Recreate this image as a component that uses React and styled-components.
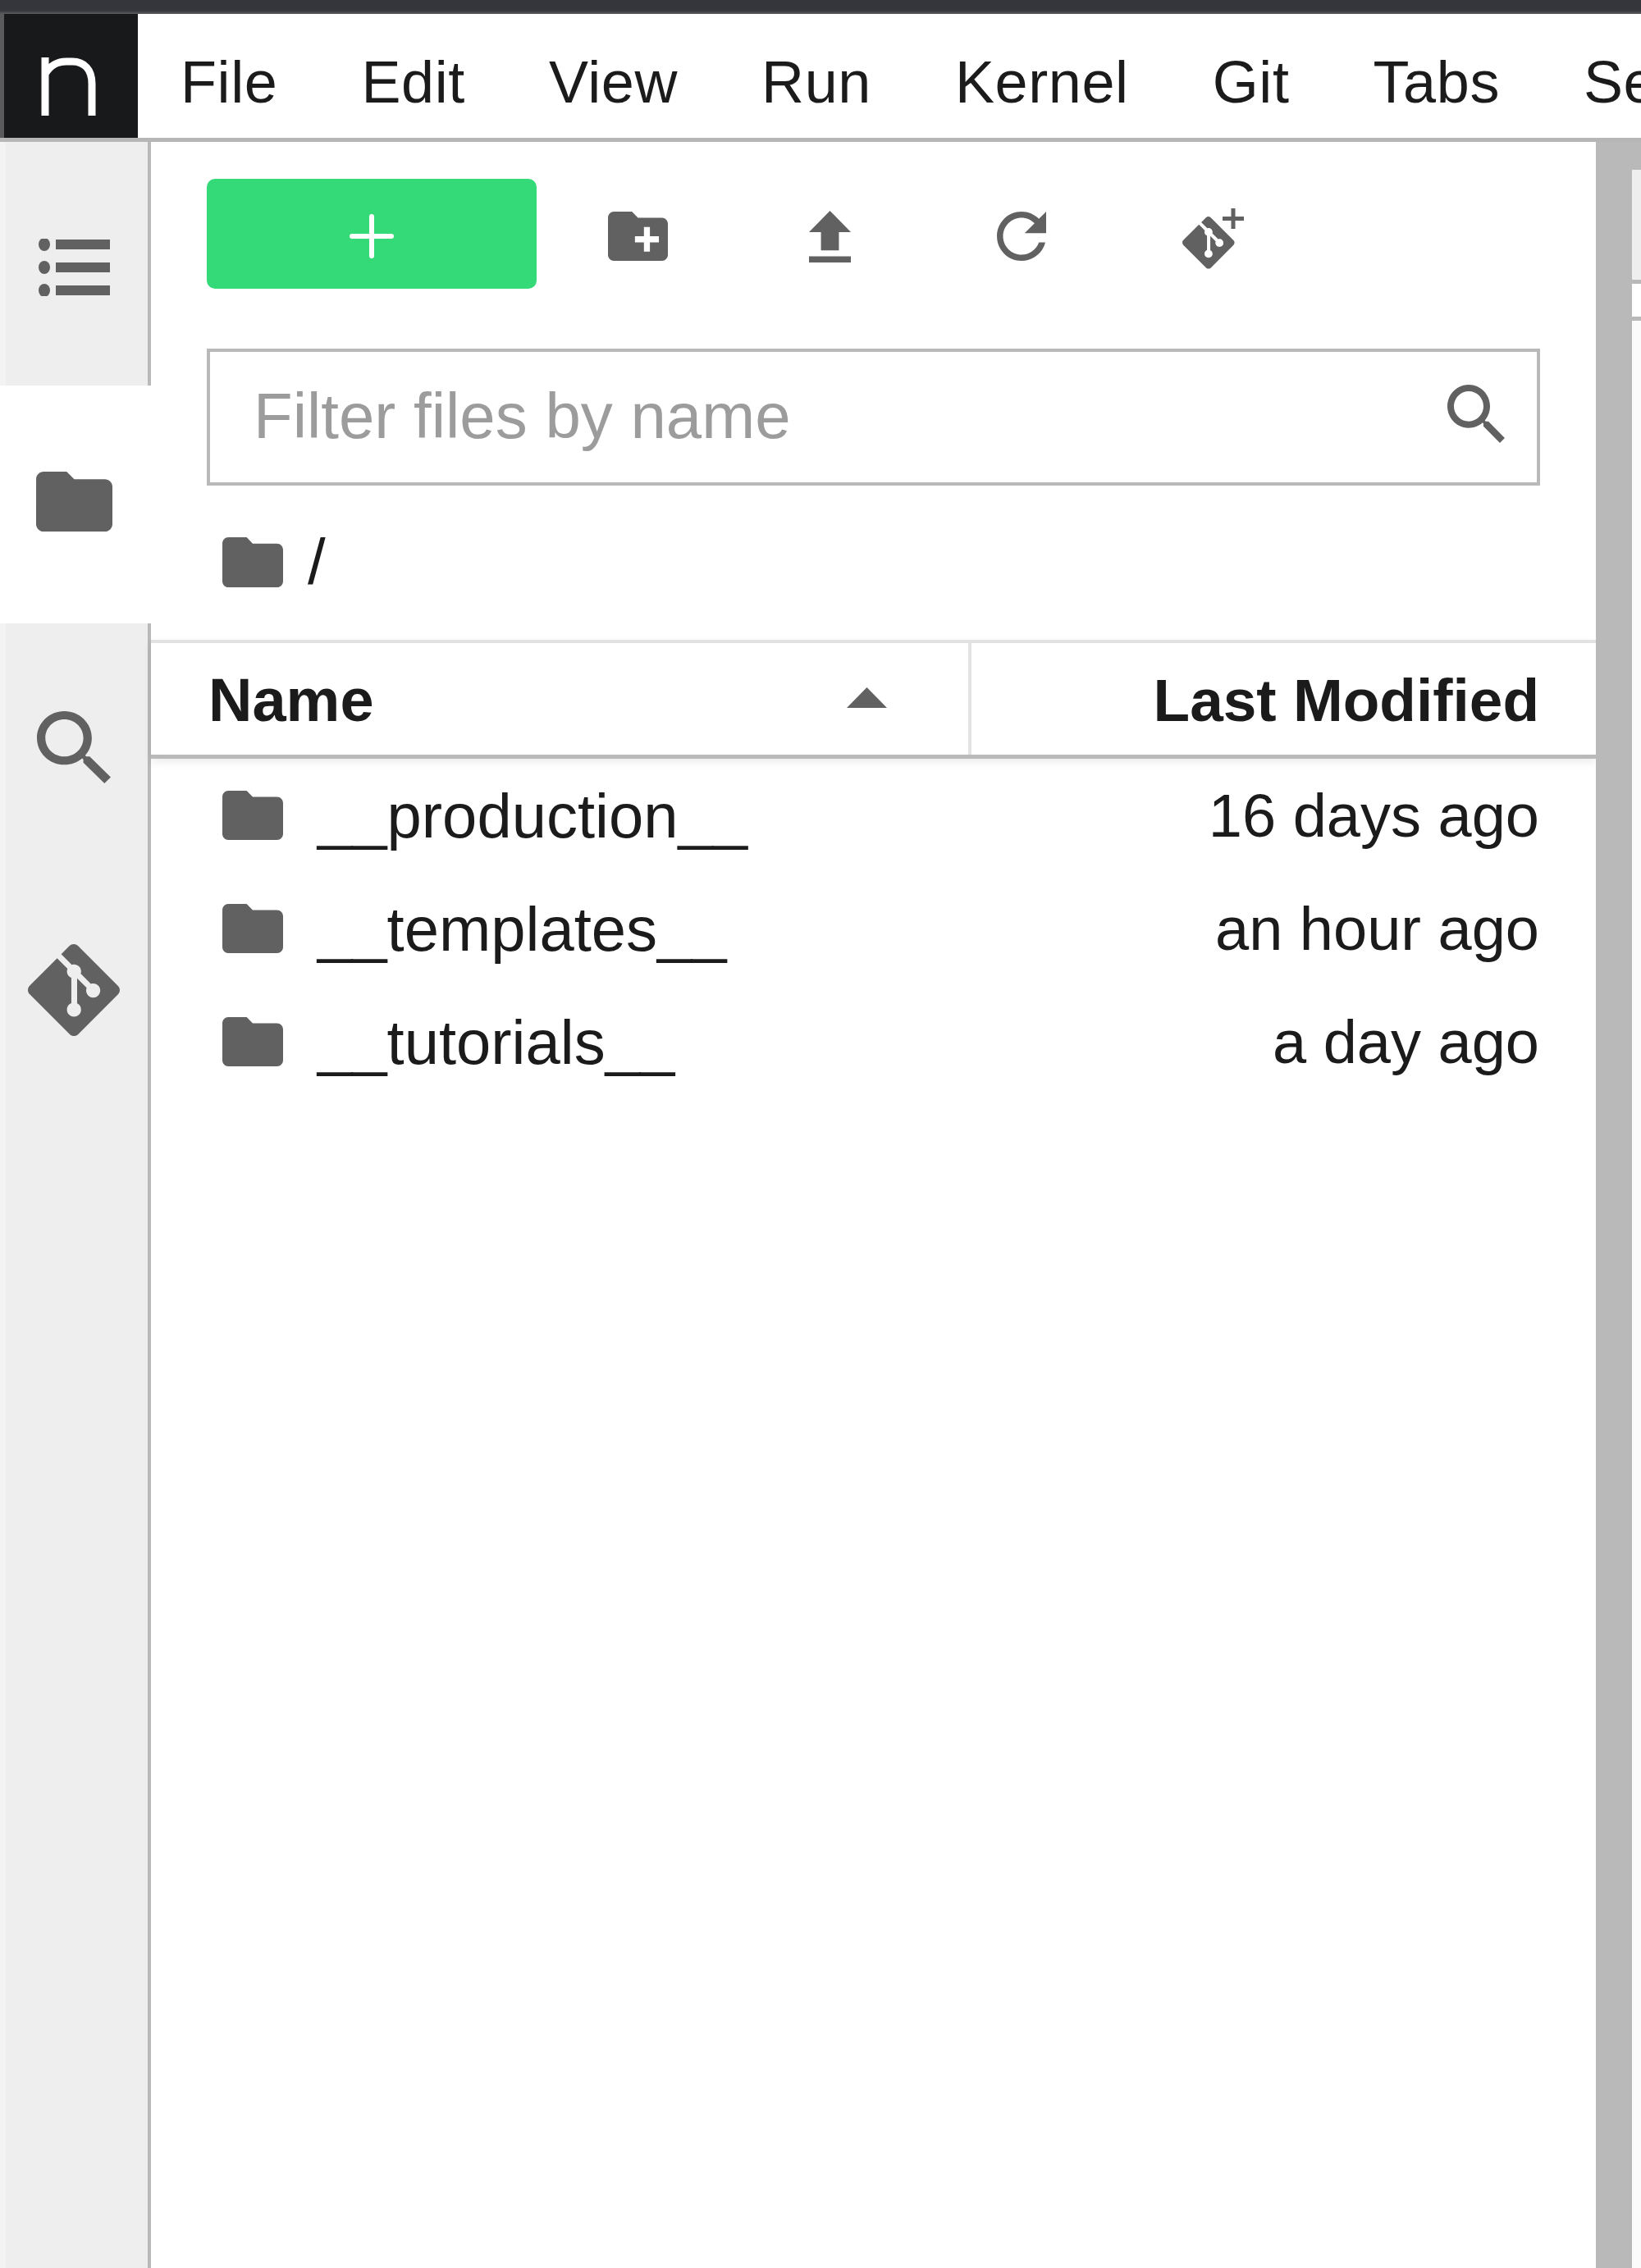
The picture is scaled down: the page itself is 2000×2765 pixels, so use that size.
import React from "react";
import styled, { createGlobalStyle } from "styled-components";

const Global = createGlobalStyle`
  html, body { margin: 0; padding: 0; background: #fff; }
  body { font-family: "Liberation Sans", Arial, sans-serif; color: #1b1b1b; overflow: hidden; }
  * { box-sizing: border-box; }
`;

const Page = styled.div`
  width: 2000px;
  height: 2765px;
  display: flex;
  flex-direction: column;
  overflow: hidden;
`;
const TopStrip = styled.div`
  height: 17px;
  flex: none;
  background: linear-gradient(#35363b 0, #35363b 13px, #5c5d61 17px);
`;
const MenuBar = styled.nav`
  height: 156px;
  flex: none;
  display: flex;
  align-items: stretch;
  border-bottom: 5px solid #b6b6b6;
  overflow: hidden;
`;
const Logo = styled.div`
  width: 168px;
  flex: none;
  display: flex;
  align-items: center;
  justify-content: center;
  background: #18191b;
  border-left: 5px solid #5a5a5c;
  padding: 26px 6px 0 0;
`;
const MenuItems = styled.div`
  display: flex;
  align-items: center;
  gap: 102px;
  padding: 14px 0 0 52px;
  flex: none;
`;
const MenuItem = styled.span`
  font-size: 72px;
  letter-spacing: 0.6px;
  white-space: nowrap;
  flex: none;
`;
const Body = styled.div`
  flex: 1;
  display: flex;
  min-height: 0;
`;
const Sidebar = styled.aside`
  width: 184px;
  flex: none;
  background: linear-gradient(to right, #f3f3f3 7px, #eeeeee 7px);
  border-right: 4px solid #b9b9b9;
  display: flex;
  flex-direction: column;
`;
const Tab = styled.div`
  height: ${(p) => p.$h}px;
  padding-top: ${(p) => p.$top || 0}px;
  padding-bottom: ${(p) => p.$bottom || 0}px;
  display: flex;
  align-items: center;
  justify-content: center;
  flex: none;
  color: #616161;
  ${(p) =>
    p.$active &&
    `
    background: #fff;
    width: 184px;
    margin-right: -4px;
    position: relative;
    padding-right: 4px;
  `}
`;
const Panel = styled.section`
  flex: 1;
  min-width: 0;
  display: flex;
  flex-direction: column;
`;
const PanelTop = styled.div`
  padding: 45px 68px 0;
`;
const Toolbar = styled.div`
  display: flex;
  align-items: stretch;
  height: 134px;
`;
const NewButton = styled.div`
  width: 402px;
  flex: none;
  margin-right: 6px;
  background: #35da78;
  border-radius: 10px;
  display: flex;
  align-items: center;
  justify-content: center;
  padding-top: 5px;
`;
const ToolButton = styled.div`
  width: 234px;
  flex: none;
  display: flex;
  align-items: center;
  justify-content: center;
  padding-top: ${(p) => p.$drop || 6}px;
  color: #616161;
`;
const Filter = styled.div`
  margin-top: 73px;
  height: 167px;
  border: 4px solid #b9b9b9;
  display: flex;
  align-items: center;
  justify-content: space-between;
  padding: 0 39px 2px 53px;
  color: #616161;
`;
const Placeholder = styled.span`
  font-size: 78px;
  color: #9c9c9c;
  white-space: nowrap;
`;
const FilterIcon = styled.span`
  display: flex;
  margin-bottom: 6px;
`;
const Crumbs = styled.div`
  height: 188px;
  display: flex;
  align-items: center;
  padding: 0 0 2px 19px;
  gap: 30px;
  color: #616161;
`;
const Slash = styled.span`
  font-size: 78px;
  color: #1b1b1b;
  line-height: 1;
`;
const Header = styled.div`
  height: 145px;
  flex: none;
  display: flex;
  border-top: 4px solid #e2e2e2;
  border-bottom: 5px solid #bababa;
  box-shadow: 0 4px 10px rgba(0, 0, 0, 0.08);
`;
const NameCol = styled.div`
  width: 1000px;
  flex: none;
  display: flex;
  align-items: center;
  justify-content: space-between;
  padding: 0 99px 0 70px;
  border-right: 4px solid #e2e2e2;
  color: #616161;
`;
const ModCol = styled.div`
  flex: 1;
  display: flex;
  align-items: center;
  justify-content: flex-end;
  padding-right: 69px;
`;
const HeadText = styled.span`
  font-size: ${(p) => p.$size}px;
  font-weight: 700;
  color: #1b1b1b;
  white-space: nowrap;
  padding-top: 3px;
`;
const ArrowWrap = styled.span`
  display: flex;
  margin-bottom: 3px;
`;
const List = styled.div`
  display: flex;
  flex-direction: column;
`;
const Row = styled.div`
  height: 138px;
  display: flex;
  align-items: center;
  padding: 0 69px 0 87px;
  color: #616161;
  gap: 42px;
`;
const FileName = styled.span`
  flex: 1;
  font-size: 76px;
  color: #1b1b1b;
  white-space: nowrap;
`;
const Modified = styled.span`
  font-size: 74px;
  color: #1b1b1b;
  white-space: nowrap;
`;
const Splitter = styled.div`
  width: 44px;
  flex: none;
  background: #b9b9b9;
`;
const Edge = styled.div`
  width: 11px;
  flex: none;
  display: flex;
  flex-direction: column;
`;
const EdgeBlock = styled.div`
  height: ${(p) => p.$h}px;
  flex: ${(p) => (p.$h ? "none" : 1)};
  background: ${(p) => p.$c};
`;

const FOLDER =
  "M10 4H4c-1.1 0-1.99.9-1.99 2L2 18c0 1.1.9 2 2 2h16c1.1 0 2-.9 2-2V8c0-1.1-.9-2-2-2h-8l-2-2z";
const GIT =
  "M23.546 10.93L13.067.452c-.604-.603-1.582-.603-2.188 0L8.708 2.627l2.76 2.76c.645-.215 1.379-.07 1.889.441.516.515.658 1.258.438 1.9l2.658 2.66c.645-.223 1.387-.078 1.9.435.721.72.721 1.884 0 2.604-.719.719-1.881.719-2.6 0-.539-.541-.674-1.337-.404-1.996L12.86 8.955v6.525c.176.086.342.203.488.348.713.721.713 1.883 0 2.6-.719.721-1.889.721-2.609 0-.719-.719-.719-1.879 0-2.598.182-.18.387-.316.605-.406V8.835c-.217-.091-.424-.222-.6-.401-.545-.545-.676-1.342-.396-2.009L7.636 3.7.45 10.881c-.6.605-.6 1.584 0 2.189l10.48 10.477c.604.604 1.582.604 2.186 0l10.43-10.43c.605-.603.605-1.582 0-2.187";
const SEARCH =
  "M15.5 14h-.79l-.28-.27C15.41 12.59 16 11.11 16 9.5 16 5.91 13.09 3 9.5 3S3 5.91 3 9.5 5.91 16 9.5 16c1.61 0 3.09-.59 4.23-1.57l.27.28v.79l5 4.99L20.49 19l-4.99-5zm-6 0C7.01 14 5 11.99 5 9.5S7.01 5 9.5 5 14 7.01 14 9.5 11.99 14 9.5 14z";

const Folder = ({ w, h }) => (
  <svg width={w} height={h} viewBox="2 4 20 16" preserveAspectRatio="none" fill="currentColor" style={{ flex: "none" }}>
    <path d={FOLDER} />
  </svg>
);
const Search = ({ w, h }) => (
  <svg width={w} height={h} viewBox="3 3 17.5 17.5" preserveAspectRatio="none" fill="currentColor">
    <path d={SEARCH} />
  </svg>
);
const ListIcon = () => (
  <svg width="87" height="70" viewBox="0 0 87 70" fill="currentColor">
    <ellipse cx="7" cy="7" rx="7" ry="8" />
    <ellipse cx="7" cy="35" rx="7" ry="8" />
    <ellipse cx="7" cy="63" rx="7" ry="8" />
    <rect x="21" y="1" width="66" height="12" />
    <rect x="21" y="29" width="66" height="12" />
    <rect x="21" y="57" width="66" height="12" />
  </svg>
);
const LogoMark = () => (
  <svg width="67" height="71" viewBox="0 0 67 71" fill="none" stroke="#fff" strokeWidth="9">
    <path d="M5 71V0M5 20C12 9 20 5 31 5H38C53 5 62 15 62 32V71" />
  </svg>
);
const Plus = () => (
  <svg width="54" height="54" viewBox="0 0 54 54" stroke="#fff" strokeWidth="6" strokeLinecap="round">
    <path d="M27 3V51M3 27H51" />
  </svg>
);
const NewFolder = () => (
  <svg width="73" height="60" viewBox="2 4 20 16" preserveAspectRatio="none" fill="currentColor">
    <path d="M20 6h-8l-2-2H4c-1.11 0-1.99.89-1.99 2L2 18c0 1.11.89 2 2 2h16c1.11 0 2-.89 2-2V8c0-1.11-.89-2-2-2zm-1 8h-3v3h-2v-3h-3v-2h3V9h2v3h3v2z" />
  </svg>
);
const Upload = () => (
  <svg width="51" height="63" viewBox="5 3 14 17" preserveAspectRatio="none" fill="currentColor">
    <path d="M9 16h6v-6h4l-7-7-7 7h4zm-4 2h14v2H5z" />
  </svg>
);
const Refresh = () => (
  <svg width="60" height="60" viewBox="4 4 16 16" fill="currentColor">
    <path d="M17.65 6.35C16.2 4.9 14.21 4 12 4c-4.42 0-7.99 3.58-7.99 8s3.57 8 7.99 8c3.73 0 6.84-2.55 7.73-6h-2.08c-.82 2.33-3.04 4-5.65 4-3.31 0-6-2.69-6-6s2.69-6 6-6c1.66 0 3.14.69 4.22 1.78L13 11h7V4l-2.35 2.35z" />
  </svg>
);
const GitPlus = () => (
  <svg width="76" height="75" viewBox="0 0 76 75" fill="currentColor">
    <path transform="translate(0 10) scale(2.65)" d={GIT} />
    <path d="M62 0V25M49 12.5H75" stroke="currentColor" strokeWidth="5" fill="none" />
  </svg>
);
const Git = () => (
  <svg width="112" height="112" viewBox="0 0 24 24" fill="currentColor">
    <path d={GIT} />
  </svg>
);
const SortArrow = () => (
  <svg width="49" height="25" viewBox="0 0 49 25" fill="currentColor">
    <path d="M24.5 0L49 25H0z" />
  </svg>
);

const menus = ["File", "Edit", "View", "Run", "Kernel", "Git", "Tabs", "Settings", "Help"];
const files = [
  ["__production__", "16 days ago"],
  ["__templates__", "an hour ago"],
  ["__tutorials__", "a day ago"],
];

export default function App() {
  return (
    <Page>
      <Global />
      <TopStrip />
      <MenuBar>
        <Logo>
          <LogoMark />
        </Logo>
        <MenuItems>
          {menus.map((m) => (
            <MenuItem key={m}>{m}</MenuItem>
          ))}
        </MenuItems>
      </MenuBar>
      <Body>
        <Sidebar>
          <Tab $h={297} $top={8}>
            <ListIcon />
          </Tab>
          <Tab $h={290} $bottom={8} $active>
            <Folder w={93} h={73} />
          </Tab>
          <Tab $h={296} $top={6}>
            <Search w={90} h={88} />
          </Tab>
          <Tab $h={296} $top={6}>
            <Git />
          </Tab>
        </Sidebar>
        <Panel>
          <PanelTop>
            <Toolbar>
              <NewButton>
                <Plus />
              </NewButton>
              <ToolButton>
                <NewFolder />
              </ToolButton>
              <ToolButton>
                <Upload />
              </ToolButton>
              <ToolButton>
                <Refresh />
              </ToolButton>
              <ToolButton $drop={12}>
                <GitPlus />
              </ToolButton>
            </Toolbar>
            <Filter>
              <Placeholder>Filter files by name</Placeholder>
              <FilterIcon>
                <Search w={70} h={71} />
              </FilterIcon>
            </Filter>
            <Crumbs>
              <Folder w={74} h={61} />
              <Slash>/</Slash>
            </Crumbs>
          </PanelTop>
          <Header>
            <NameCol>
              <HeadText $size={74}>Name</HeadText>
              <ArrowWrap>
                <SortArrow />
              </ArrowWrap>
            </NameCol>
            <ModCol>
              <HeadText $size={73}>Last Modified</HeadText>
            </ModCol>
          </Header>
          <List>
            {files.map(([n, d]) => (
              <Row key={n}>
                <Folder w={74} h={60} />
                <FileName>{n}</FileName>
                <Modified>{d}</Modified>
              </Row>
            ))}
          </List>
        </Panel>
        <Splitter />
        <Edge>
          <EdgeBlock $h={34} $c="#b9b9b9" />
          <EdgeBlock $h={134} $c="#eeeeee" />
          <EdgeBlock $h={5} $c="#b9b9b9" />
          <EdgeBlock $h={40} $c="#ffffff" />
          <EdgeBlock $h={5} $c="#b9b9b9" />
          <EdgeBlock $c="#fbfbfb" />
        </Edge>
      </Body>
    </Page>
  );
}
